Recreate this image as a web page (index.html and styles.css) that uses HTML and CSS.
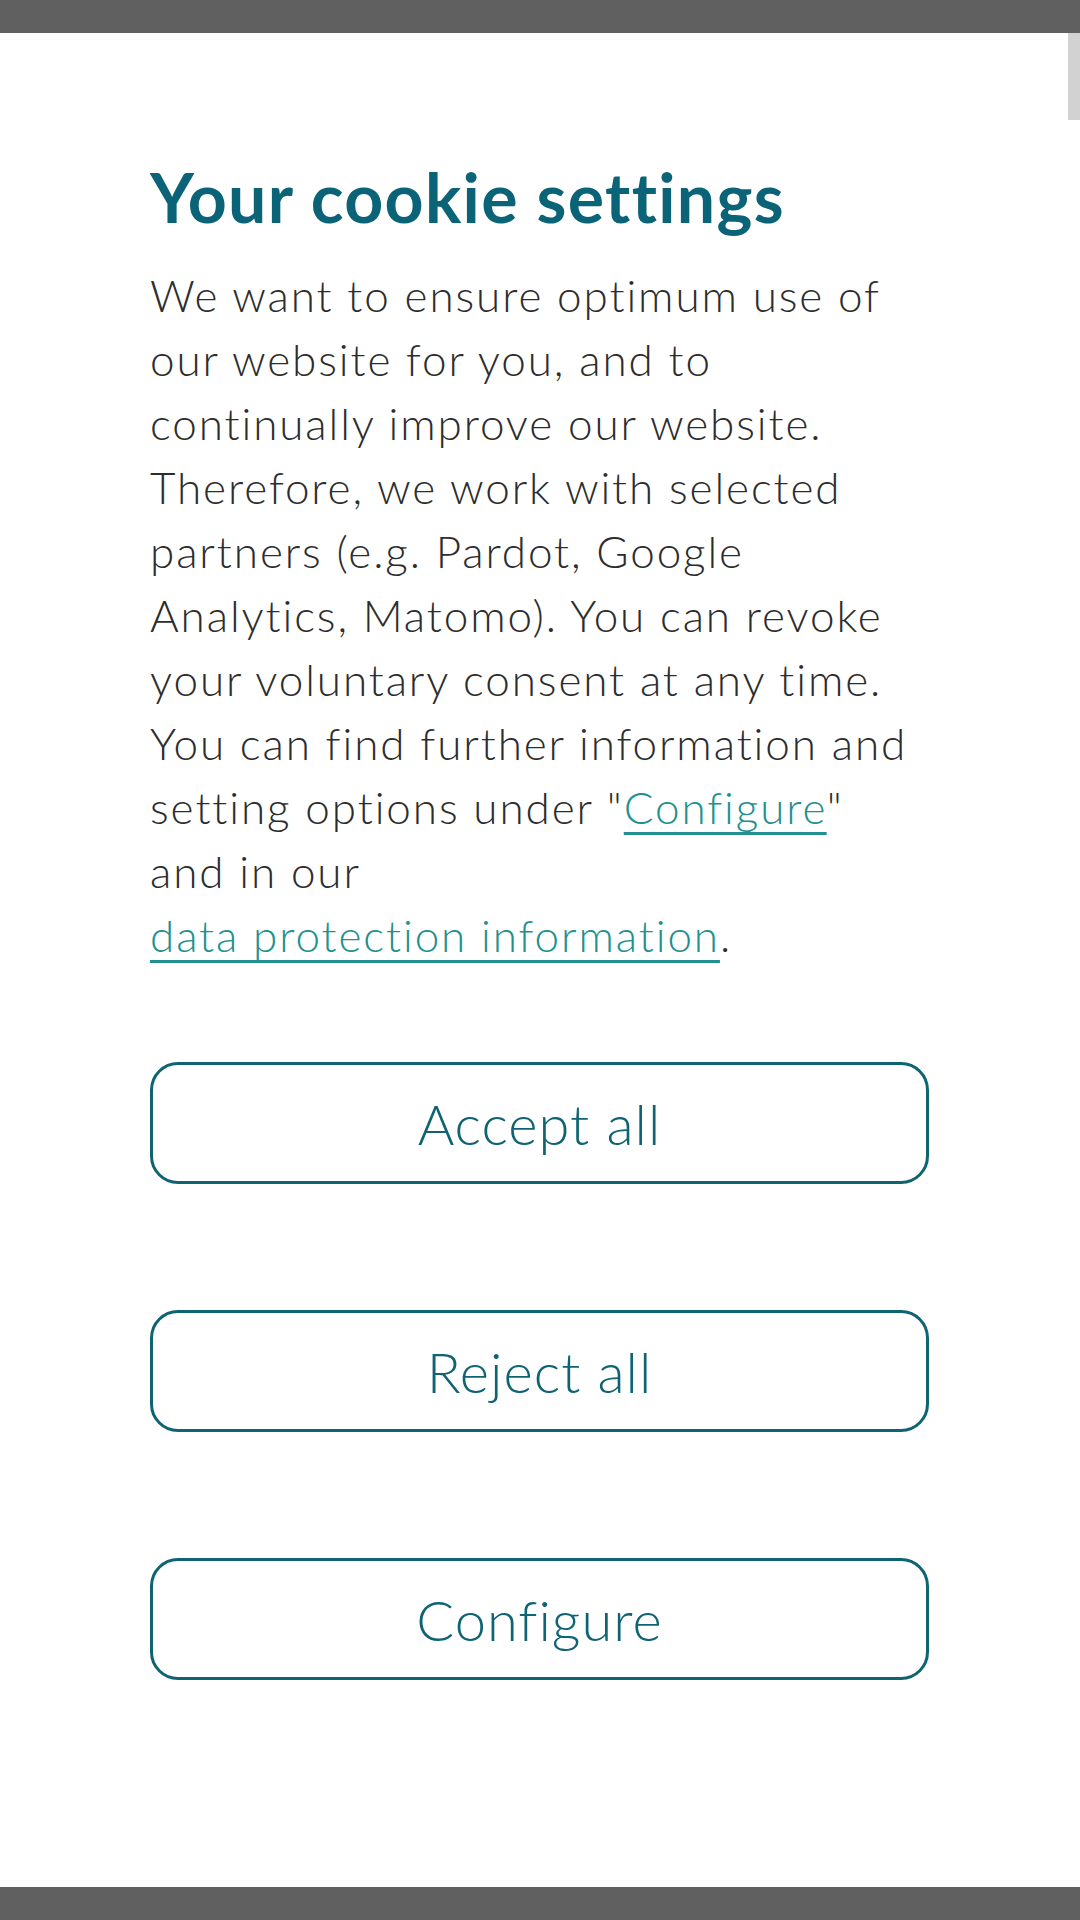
FILE: index.html
```html
<!DOCTYPE html>
<html lang="en">
<head>
<meta charset="utf-8">
<title>Your cookie settings</title>
<link rel="stylesheet" href="styles.css">
</head>
<body>
<div class="screen">
  <div class="topbar"></div>
  <main class="dialog">
    <h1 class="title">Your cookie settings</h1>
    <p class="text">We want to ensure optimum use of<br>
our website for you, and to<br>
continually improve our website.<br>
Therefore, we work with selected<br>
partners (e.g. Pardot, Google<br>
Analytics, Matomo). You can revoke<br>
your voluntary consent at any time.<br>
You can find further information and<br>
setting options under "<a class="link" href="#">Configure</a>"<br>
and in our<br>
<a class="link" href="#">data protection information</a>.</p>
    <div class="actions">
      <button class="btn">Accept all</button>
      <button class="btn">Reject all</button>
      <button class="btn">Configure</button>
    </div>
  </main>
  <div class="bottombar"></div>
  <div class="scrollbar"></div>
</div>
</body>
</html>
```
FILE: styles.css
```css
html, body {
  margin: 0;
  padding: 0;
  background: #ffffff;
}
.screen {
  position: relative;
  width: 1080px;
  height: 1920px;
  display: flex;
  flex-direction: column;
  overflow: hidden;
}
.topbar {
  height: 33px;
  background: #606060;
  flex: none;
}
.bottombar {
  height: 33px;
  background: #606060;
  flex: none;
}
.scrollbar {
  position: absolute;
  right: 0;
  top: 33px;
  width: 12px;
  height: 87px;
  background: #d2d2d2;
}
.dialog {
  flex: 1;
  padding: 0 151px 0 150px;
  display: flex;
  flex-direction: column;
}
.title {
  margin: 124px 0 0 0;
  font-family: "Lato", "Liberation Sans", sans-serif;
  font-weight: 700;
  font-size: 68px;
  line-height: 80px;
  letter-spacing: 1.3px;
  color: #0b6377;
}
.text {
  margin: 26px 0 0 0;
  font-family: "Lato", "Liberation Sans", sans-serif;
  font-weight: 300;
  font-size: 44px;
  line-height: 64px;
  letter-spacing: 1.9px;
  color: #2d2d2d;
  white-space: nowrap;
}
.link {
  color: #22908f;
  text-decoration: underline;
  text-decoration-thickness: 3px;
  text-underline-offset: 8px;
}
.actions {
  margin-top: 95px;
  display: flex;
  flex-direction: column;
  gap: 126px;
}
.btn {
  height: 122px;
  width: 100%;
  border: 3px solid #0f6373;
  border-radius: 28px;
  background: #ffffff;
  color: #0f6373;
  font-family: "Lato", "Liberation Sans", sans-serif;
  font-weight: 300;
  font-size: 56px;
  letter-spacing: 1px;
  padding: 0;
}
```
